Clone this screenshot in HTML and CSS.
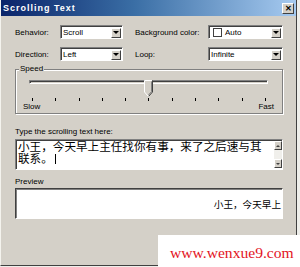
FILE: index.html
```html
<!DOCTYPE html>
<html lang="en">
<head>
    <meta charset="UTF-8">
    <title>Scrolling Text</title>
    <link rel="stylesheet" href="styles.css">
</head>
<body>

    <div class="window">
        <!-- Title bar -->
        <div class="titlebar">
            <span class="title">Scrolling Text</span>
            <span class="close-btn">&#x2715;</span>
        </div>

        <div class="dialog">
            <div class="row">
                <span class="label label-left">Behavior:</span>
                <div class="combo combo-left"><span class="combo-text">Scroll</span><span class="drop-btn"></span></div>
                <span class="label label-right">Background color:</span>
                <div class="combo combo-right"><span class="swatch"></span><span class="combo-text">Auto</span><span class="drop-btn"></span></div>
            </div>
            <div class="row">
                <span class="label label-left">Direction:</span>
                <div class="combo combo-left"><span class="combo-text">Left</span><span class="drop-btn"></span></div>
                <span class="label label-right">Loop:</span>
                <div class="combo combo-right"><span class="combo-text">Infinite</span><span class="drop-btn"></span></div>
            </div>

            <!-- Speed group -->
            <div class="group">
                <span class="group-title">Speed</span>
                <div class="slider">
                    <div class="track"></div>
                    <svg class="thumb" width="9" height="17" viewBox="0 0 9 17">
                        <polygon points="0.5,0.5 8.5,0.5 8.5,12 4.5,16.5 0.5,12" fill="#d4d0c8"/>
                        <polyline points="0.5,12 0.5,0.5 8,0.5" fill="none" stroke="#fff"/>
                        <polyline points="8.5,0.5 8.5,12 4.5,16.5" fill="none" stroke="#404040"/>
                        <polyline points="7.5,1.5 7.5,11.6 4.5,15" fill="none" stroke="#808080"/>
                        <line x1="0.5" y1="12" x2="4.5" y2="16.5" stroke="#fff"/>
                    </svg>
                </div>
                <div class="ticks">
                    <i></i><i></i><i></i><i></i><i></i><i></i><i></i><i></i><i></i><i></i><i></i>
                </div>
                <div class="speed-labels">
                    <span>Slow</span>
                    <span>Fast</span>
                </div>
            </div>

            <div class="caption caption-text">Type the scrolling text here:</div>
            <div class="textbox">
                <div class="textbox-content">小王，今天早上主任找你有事，来了之后速与其联系。<span class="caret"></span></div>
                <div class="scrollbar">
                    <span class="scroll-btn"><span class="arrow-up"></span></span>
                    <span class="scroll-track"></span>
                    <span class="scroll-btn"><span class="arrow-down"></span></span>
                </div>
            </div>

            <div class="caption caption-preview">Preview</div>
            <div class="preview">
                <span class="preview-text">小王，今天早上</span>
            </div>
        </div>
    </div>

    <!-- Watermark -->
    <div class="watermark">www.wenxue9.com</div>

</body>
</html>
```

FILE: styles.css
```css
/* General Styles */
html, body {
    margin: 0;
    height: 100%;
}

body {
    position: relative;
    background-color: #eeeeea;
    font-family: 'Liberation Sans', Arial, sans-serif;
    font-size: 8px;
    color: #000;
    overflow: hidden;
}

.window {
    width: 297px;
    height: 266px;
    box-sizing: border-box;
    background-color: #d4d0c8;
    border-left: 1px solid #f4f3ee;
    border-right: 1px solid #404040;
    border-bottom: 1px solid #404040;
}

/* Title bar */
.titlebar {
    height: 16px;
    display: flex;
    align-items: center;
    justify-content: space-between;
    padding: 0 2px 0 2px;
    background: linear-gradient(to right, #0a246a, #3a6ea5 45%, #a6caf0);
}

.title {
    color: #fff;
    font-weight: bold;
    font-size: 9px;
    letter-spacing: 1px;
}

.close-btn {
    width: 12px;
    height: 11px;
    box-sizing: border-box;
    background-color: #d4d0c8;
    border: 1px solid;
    border-color: #fff #404040 #404040 #fff;
    font-size: 8px;
    font-weight: bold;
    line-height: 9px;
    text-align: center;
}

/* Dialog body */
.dialog {
    padding: 9px 13px 0 14px;
}

.row {
    display: flex;
    align-items: center;
    height: 14px;
    margin-bottom: 8px;
}

.label-left {
    width: 45px;
}

.label-right {
    width: 73px;
    margin-left: 12px;
}

.combo {
    height: 14px;
    box-sizing: border-box;
    display: flex;
    align-items: center;
    background-color: #fff;
    border: 1px solid;
    border-color: #808080 #fff #fff #808080;
    box-shadow: inset 1px 1px #404040;
    padding: 1px 1px 0 2px;
}

.combo-left {
    width: 63px;
}

.combo-right {
    width: 75px;
}

.combo-text {
    flex: 1;
}

.swatch {
    width: 9px;
    height: 9px;
    box-sizing: border-box;
    border: 1px solid #404040;
    margin: 0 3px 0 2px;
}

.drop-btn {
    width: 10px;
    height: 10px;
    box-sizing: border-box;
    background-color: #d4d0c8;
    border: 1px solid;
    border-color: #fff #404040 #404040 #fff;
    display: flex;
    align-items: center;
    justify-content: center;
}

.drop-btn::after {
    content: "";
    border-left: 3px solid transparent;
    border-right: 3px solid transparent;
    border-top: 3px solid #000;
}

/* Speed group */
.group {
    position: relative;
    margin-top: 8px;
    width: 268px;
    height: 45px;
    box-sizing: border-box;
    border: 1px solid #808080;
    box-shadow: inset 1px 1px #fff, 1px 1px #fff;
}

.group-title {
    position: absolute;
    top: -6px;
    left: 3px;
    padding: 0 1px;
    line-height: 10px;
    background-color: #d4d0c8;
}

.slider {
    position: relative;
    height: 16px;
    margin: 10px 14px 0 13px;
}

.track {
    height: 4px;
    margin-top: 5px;
    box-sizing: border-box;
    border: 1px solid;
    border-color: #808080 #fff #fff #808080;
    box-shadow: inset 1px 1px #404040;
}

.thumb {
    position: absolute;
    top: 0;
    left: 115px;
}

.ticks {
    display: flex;
    justify-content: space-between;
    height: 3px;
    margin: 2px 16px 0 16px;
}

.ticks i {
    width: 1px;
    background-color: #000;
}

.speed-labels {
    display: flex;
    justify-content: space-between;
    line-height: 9px;
    margin-top: 1px;
    padding: 0 8px 0 7px;
}

/* Text areas */
.caption {
    line-height: 10px;
}

.caption-text {
    margin-top: 13px;
}

.caption-preview {
    margin-top: 7px;
}

.textbox {
    display: flex;
    width: 268px;
    height: 31px;
    margin-top: 2px;
    box-sizing: border-box;
    background-color: #fff;
    border: 1px solid;
    border-color: #808080 #fff #fff #808080;
    box-shadow: inset 1px 1px #404040;
}

.textbox-content {
    flex: 1;
    padding: 1px 8px 0 2px;
    font-family: 'Noto Sans CJK SC', sans-serif;
    font-size: 11.6px;
    line-height: 11.5px;
}

.caret {
    display: inline-block;
    width: 1px;
    height: 10px;
    margin-left: 2px;
    vertical-align: -1px;
    background-color: #000;
}

.scrollbar {
    width: 8px;
    display: flex;
    flex-direction: column;
    padding: 1px 0;
}

.scroll-btn {
    height: 9px;
    box-sizing: border-box;
    background-color: #d4d0c8;
    border: 1px solid;
    border-color: #fff #404040 #404040 #fff;
    display: flex;
    align-items: center;
    justify-content: center;
}

.scroll-track {
    flex: 1;
    background-color: #f0efeb;
}

.arrow-up {
    border-left: 2px solid transparent;
    border-right: 2px solid transparent;
    border-bottom: 2px solid #404040;
}

.arrow-down {
    border-left: 2px solid transparent;
    border-right: 2px solid transparent;
    border-top: 2px solid #404040;
}

.preview {
    width: 268px;
    height: 31px;
    margin-top: 1px;
    box-sizing: border-box;
    background-color: #fff;
    border: 1px solid;
    border-color: #404040 #fff #fff #404040;
    box-shadow: inset 1px 1px #808080;
    display: flex;
    align-items: center;
    justify-content: flex-end;
    padding-right: 1px;
    white-space: nowrap;
}

.preview-text {
    font-family: 'Noto Sans CJK SC', sans-serif;
    font-size: 9.6px;
    line-height: 12px;
}

/* Watermark */
.watermark {
    position: absolute;
    left: 158px;
    top: 235px;
    width: 142px;
    height: 32px;
    box-sizing: border-box;
    background-color: #fff;
    padding: 10px 0 0 12px;
    font-family: 'Liberation Serif', 'Times New Roman', serif;
    font-size: 15.6px;
    line-height: 16px;
    color: #e3141e;
}
```
